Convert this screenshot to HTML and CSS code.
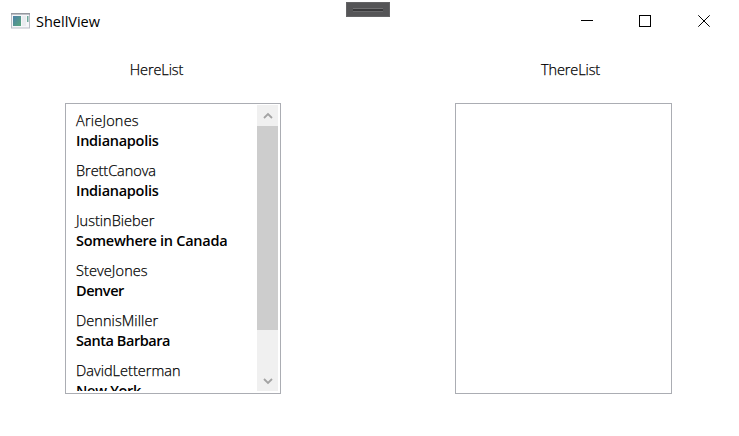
FILE: index.html
```html
<!DOCTYPE html>
<html lang="en">
<head>
<meta charset="utf-8">
<title>ShellView</title>
<link rel="stylesheet" href="styles.css">
</head>
<body>
<header class="titlebar">
  <svg class="app-icon" width="20" height="16" viewBox="0 0 20 16">
    <defs><linearGradient id="pane" x2="1" y2="1"><stop offset="0" stop-color="#4d7fa9"/><stop offset="1" stop-color="#58a77b"/></linearGradient></defs>
    <rect x=".5" y=".5" width="18" height="14.5" fill="#f5f6f9" stroke="#b9bdc5"/>
    <path d="M0 .8H19" stroke="#92959e" stroke-width="1.5"/>
    <rect x="2" y="3" width="8" height="10" fill="url(#pane)"/>
    <rect x="11" y="3" width="4" height="10" fill="#e9ecef"/>
    <rect x="16" y="3" width="1.5" height="6" fill="#70a99b"/>
  </svg>
  <h1 class="title">ShellView</h1>
  <div class="controls">
    <svg class="minimize" width="12" height="12" viewBox="0 0 12 12" shape-rendering="crispEdges"><path d="M0 5.5H12"/></svg>
    <svg width="12" height="12" viewBox="0 0 12 12" shape-rendering="crispEdges"><path d="M.5 .5H11.5V11.5H.5Z"/></svg>
    <svg width="12" height="12" viewBox="0 0 12 12"><path d="M.3 .3 11.7 11.7M11.7 .3 .3 11.7"/></svg>
  </div>
</header>
<div class="debug-handle"><span class="grip"></span></div>
<main class="lists">
  <section class="column here">
    <h2 class="heading">HereList</h2>
    <div class="box">
      <ul class="people">
        <li><span class="name n1">ArieJones</span><span class="city">Indianapolis</span></li>
        <li><span class="name n2">BrettCanova</span><span class="city">Indianapolis</span></li>
        <li><span class="name">JustinBieber</span><span class="city">Somewhere in Canada</span></li>
        <li><span class="name n4">SteveJones</span><span class="city c4">Denver</span></li>
        <li><span class="name n5">DennisMiller</span><span class="city c5">Santa Barbara</span></li>
        <li><span class="name">DavidLetterman</span><span class="city">New York</span></li>
      </ul>
      <div class="scrollbar">
        <svg class="arrow" width="21" height="21" viewBox="0 0 21 21"><path d="M7 13 11 9 15 13"/></svg>
        <div class="thumb"></div>
        <svg class="arrow" width="21" height="21" viewBox="0 0 21 21"><path d="M7 9 11 13 15 9"/></svg>
      </div>
    </div>
  </section>
  <section class="column there">
    <h2 class="heading">ThereList</h2>
    <div class="box"></div>
  </section>
</main>
</body>
</html>
```
FILE: styles.css
```css
* { box-sizing: border-box; }
body {
  margin: 0;
  height: 436px;
  overflow: hidden;
  background: #fff;
  color: #000;
  font: 400 14.5px/20px "Open Sans", "Noto Sans", sans-serif;
}
h1, h2, ul { margin: 0; padding: 0; font: inherit; list-style: none; }
.titlebar { display: flex; height: 42px; padding: 0 29px 0 11px; align-items: center; }
.app-icon { margin-right: 5px; }
.title { padding-top: 1px; letter-spacing: 0; }
.controls { display: flex; gap: 47px; margin-left: auto; }
.minimize { margin-right: -1px; }
.controls path { fill: none; stroke: #000; stroke-width: 1; }
.debug-handle {
  position: absolute; left: 346px; top: 2px;
  width: 44px; height: 15px;
  display: flex; align-items: center; justify-content: center;
  background: #555557; border: 1px solid #646466;
}
.grip { width: 30px; height: 4px; background: #3a3a3c; border-top: 1px solid #717173; border-bottom: 1px solid #69696b; }
.lists { display: flex; gap: 174px; padding: 18px 67px 0 65px; }
.column { width: 216px; }
.there { width: 217px; }
.heading { height: 43px; text-align: center; font-weight: 300; letter-spacing: -.1px; white-space: nowrap; }
.heading, .name { -webkit-text-stroke: .25px #000; }
.here .heading { padding-right: 33px; }
.there .heading { padding-left: 14px; }
.box { display: flex; height: 291px; padding: 1px 2px 2px; border: 1px solid #abadb3; overflow: hidden; }
.people { flex: 1; height: 286px; padding: 6px 0 0 8px; overflow: hidden; }
.people li { height: 50px; }
.name, .city { display: block; width: max-content; white-space: nowrap; }
.name { font-weight: 300; letter-spacing: .02px; }
.n1 { letter-spacing: .2px; }
.n2 { letter-spacing: -.05px; }
.n4 { letter-spacing: .1px; }
.n5 { letter-spacing: .07px; }
.city { font-weight: 600; letter-spacing: -.27px; }
.c4, .c5 { letter-spacing: -.45px; }
.scrollbar { display: flex; flex-direction: column; width: 21px; height: 286px; background: #f0f0f0; }
.arrow { display: block; flex: none; }
.arrow path { fill: none; stroke: #a3a3a3; stroke-width: 1.8; }
.thumb { height: 204px; margin-bottom: auto; background: #cdcdcd; }
```
